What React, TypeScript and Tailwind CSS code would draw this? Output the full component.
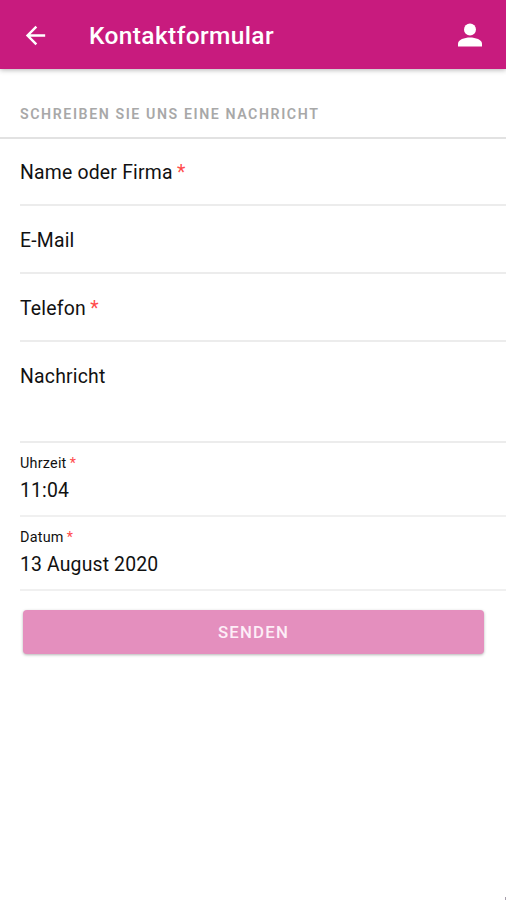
import React from "react";

interface FormRowProps {
  label: string;
  required?: boolean;
  className?: string;
}

const Required = () => (
  <span className="tracking-[-0.4px] text-[#ff4b4b]"> *</span>
);

const FormRow: React.FC<FormRowProps> = ({ label, required, className }) => (
  <div
    className={`ml-5 border-b-2 border-[#ececec] text-[19.4px] leading-[24px] tracking-[0.2px] ${className}`}
  >
    {label}
    {required && <Required />}
  </div>
);

interface PickerRowProps {
  label: string;
  value: string;
  className?: string;
}

const PickerRow: React.FC<PickerRowProps> = ({ label, value, className }) => (
  <div className={`ml-5 border-b-2 border-[#f0f0f0] ${className}`}>
    <div className="h-[16px] text-[14.4px] leading-[16px] tracking-[0.22px]">
      {label}
      <Required />
    </div>
    <div className="mt-[7px] text-[19.4px] leading-[24px] tracking-[0.15px]">
      {value}
    </div>
  </div>
);

export default function App() {
  return (
    <div className="relative h-[900px] w-full overflow-hidden bg-white font-['Roboto',sans-serif] text-[#111]">
      {/* Toolbar */}
      <header className="flex h-[69px] items-center bg-[#c81b7e] pl-[21px] pr-[24px] text-white shadow-[0_1px_5px_rgba(0,0,0,0.3)]">
        <svg
          className="mt-px size-[29px]"
          viewBox="0 0 24 24"
          fill="currentColor"
        >
          <path d="M20 11H7.83l5.59-5.59L12 4l-8 8 8 8 1.41-1.41L7.83 13H20v-2z" />
        </svg>
        <h1 className="ml-[39px] mt-[4px] text-[24.5px] font-medium leading-none tracking-[0.38px]">
          Kontaktformular
        </h1>
        <svg
          className="ml-auto h-[24px] w-[24px]"
          viewBox="0 0 24 24"
          fill="currentColor"
        >
          <circle cx="12" cy="6.6" r="6" />
          <path d="M12 14.6c-5.5 0-12 2.3-12 6v3h24v-3c0-3.7-6.5-6-12-6z" />
        </svg>
      </header>

      <form>
        <h2 className="h-[70px] border-b-2 border-[#e2e2e2] pl-5 pt-[36px] text-[14.2px] font-semibold leading-[19px] tracking-[1.58px] text-[#a8a8a8]">
          SCHREIBEN SIE UNS EINE NACHRICHT
        </h2>

        <FormRow
          label="Name oder Firma"
          required
          className="h-[67px] pt-[22px]"
        />
        <FormRow label="E-Mail" className="h-[68px] pt-[23px]" />
        <FormRow label="Telefon" required className="h-[68px] pt-[23px]" />
        <FormRow label="Nachricht" className="h-[101px] pt-[23px]" />

        <PickerRow
          label="Uhrzeit"
          value="11:04"
          className="h-[74px] pt-[13px]"
        />
        <PickerRow
          label="Datum"
          value="13 August 2020"
          className="h-[74px] pt-[13px]"
        />

        <button
          type="button"
          className="ml-[23px] mt-[19px] block h-[44px] w-[461px] rounded-[4px] bg-[#e48fbe] pt-[2px] text-[16.8px] font-medium tracking-[1.2px] text-[#fdeef7] shadow-[0_1px_3px_rgba(0,0,0,0.3)]"
        >
          SENDEN
        </button>
      </form>
      <div className="absolute bottom-0 right-0 h-[3px] w-px bg-[#a79fac]" />
    </div>
  );
}
